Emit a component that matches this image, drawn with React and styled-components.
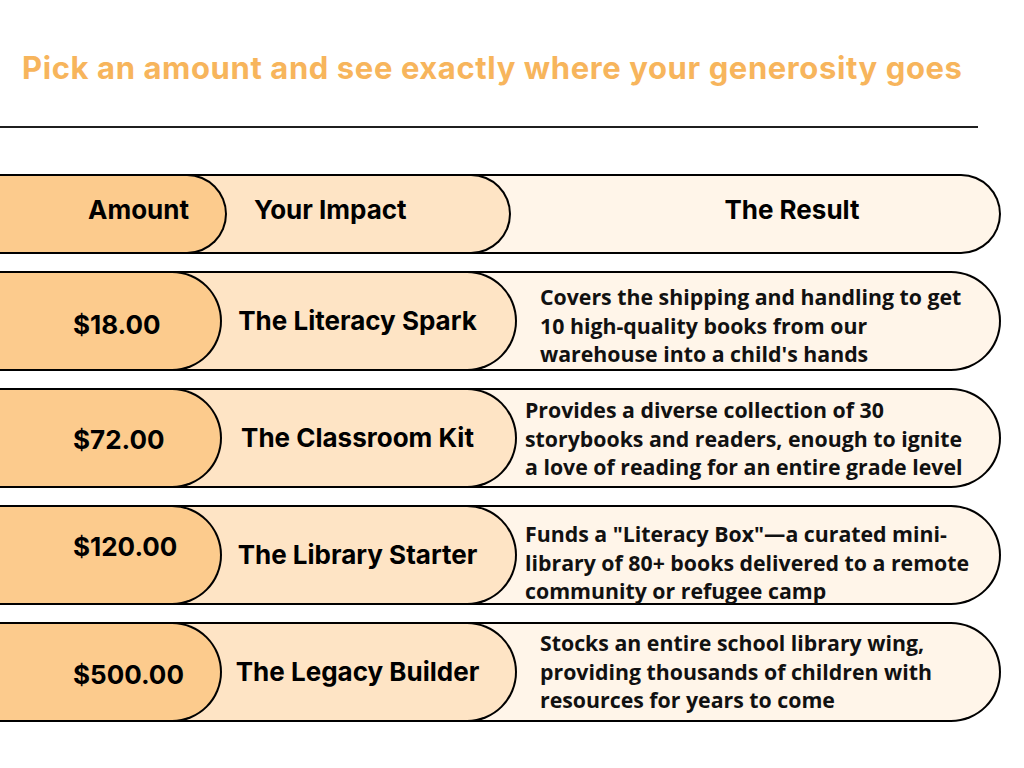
import React from "react";
import styled, { createGlobalStyle } from "styled-components";

const GlobalStyle = createGlobalStyle`
  html, body {
    margin: 0;
    padding: 0;
    background: #ffffff;
  }
  * { box-sizing: border-box; }
`;

const Page = styled.div`
  width: 1024px;
  height: 768px;
  overflow: hidden;
  background: #fff;
  padding-top: 48px;
`;

const Title = styled.h1`
  margin: 0 0 0 22px;
  font-family: Inter, "Liberation Sans", sans-serif;
  font-weight: 700;
  font-size: 31px;
  line-height: 40px;
  letter-spacing: 0.6px;
  color: #f7b55c;
  white-space: nowrap;
`;

const Divider = styled.hr`
  margin: 38px 0 0 0;
  width: 978px;
  height: 2px;
  border: none;
  background: #1f1f1f;
`;

const Table = styled.div`
  margin-top: 46px;
  display: flex;
  flex-direction: column;
  gap: 17px;
`;

const Pill = styled.div`
  display: flex;
  align-items: center;
  border: 2px solid #000;
  border-left: none;
  border-radius: 0 999px 999px 0;
`;

const ResultPill = styled(Pill)`
  width: 1001px;
  height: ${(p) => (p.$head ? 80 : 100)}px;
  background: #fff5e9;
`;

const ImpactPill = styled(Pill)`
  align-self: stretch;
  margin: -2px 0;
  width: ${(p) => (p.$head ? 511 : 517)}px;
  flex-shrink: 0;
  background: #fee4c5;
`;

const AmountPill = styled(Pill)`
  align-self: stretch;
  margin: -2px 0;
  width: ${(p) => (p.$head ? 227 : 222)}px;
  flex-shrink: 0;
  background: #fccb8d;
  padding-left: ${(p) => (p.$head ? 88 : 73)}px;
`;

const Label = styled.span`
  font-family: Inter, "Liberation Sans", sans-serif;
  font-weight: 700;
  font-size: 26px;
  color: #000;
  white-space: nowrap;
  transform: translateY(${(p) => p.$dy || 0}px);
`;

const ImpactText = styled(Label)`
  flex: 1;
  text-align: ${(p) => (p.$head ? "left" : "center")};
  padding-left: ${(p) => (p.$head ? 27 : 0)}px;
  margin-left: ${(p) => (p.$head ? 0 : -22)}px;
`;

const HeadResult = styled(Label)`
  flex: 1;
  text-align: center;
  padding-left: 74px;
`;

const ResultText = styled.p`
  margin: 0;
  padding-left: ${(p) => p.$indent}px;
  font-family: "Open Sans", "Liberation Sans", sans-serif;
  font-weight: 700;
  font-size: 21.3px;
  line-height: 28.5px;
  color: #111;
  white-space: nowrap;
  transform: translateY(${(p) => p.$dy || 0}px);
`;

const rows = [
  {
    amount: "$18.00",
    amountDy: 3,
    impact: "The Literacy Spark",
    lines: [
      "Covers the shipping and handling to get",
      "10 high-quality books from our",
      "warehouse into a child's hands",
    ],
    indent: 23,
    dy: 5,
  },
  {
    amount: "$72.00",
    amountDy: 1,
    impact: "The Classroom Kit",
    lines: [
      "Provides a diverse collection of 30",
      "storybooks and readers, enough to ignite",
      "a love of reading for an entire grade level",
    ],
    indent: 8,
    dy: 1,
  },
  {
    amount: "$120.00",
    amountDy: -9,
    impact: "The Library Starter",
    lines: [
      "Funds a \"Literacy Box\"\u2014a curated mini-",
      "library of 80+ books delivered to a remote",
      "community or refugee camp",
    ],
    indent: 8,
    dy: 8,
  },
  {
    amount: "$500.00",
    amountDy: 2,
    impact: "The Legacy Builder",
    lines: [
      "Stocks an entire school library wing,",
      "providing thousands of children with",
      "resources for years to come",
    ],
    indent: 23,
    dy: 0,
  },
];

export default function App() {
  return (
    <>
      <GlobalStyle />
      <Page>
        <Title>Pick an amount and see exactly where your generosity goes</Title>
        <Divider />
        <Table>
          <ResultPill $head>
            <ImpactPill $head>
              <AmountPill $head>
                <Label $dy={-5}>Amount</Label>
              </AmountPill>
              <ImpactText $head $dy={-5}>Your Impact</ImpactText>
            </ImpactPill>
            <HeadResult $dy={-5}>The Result</HeadResult>
          </ResultPill>
          {rows.map((r) => (
            <ResultPill key={r.amount}>
              <ImpactPill>
                <AmountPill>
                  <Label $dy={r.amountDy}>{r.amount}</Label>
                </AmountPill>
                <ImpactText $dy={-1}>{r.impact}</ImpactText>
              </ImpactPill>
              <ResultText $indent={r.indent} $dy={r.dy}>
                {r.lines.map((l, i) => (
                  <React.Fragment key={i}>
                    {l}
                    {i < r.lines.length - 1 && <br />}
                  </React.Fragment>
                ))}
              </ResultText>
            </ResultPill>
          ))}
        </Table>
      </Page>
    </>
  );
}
